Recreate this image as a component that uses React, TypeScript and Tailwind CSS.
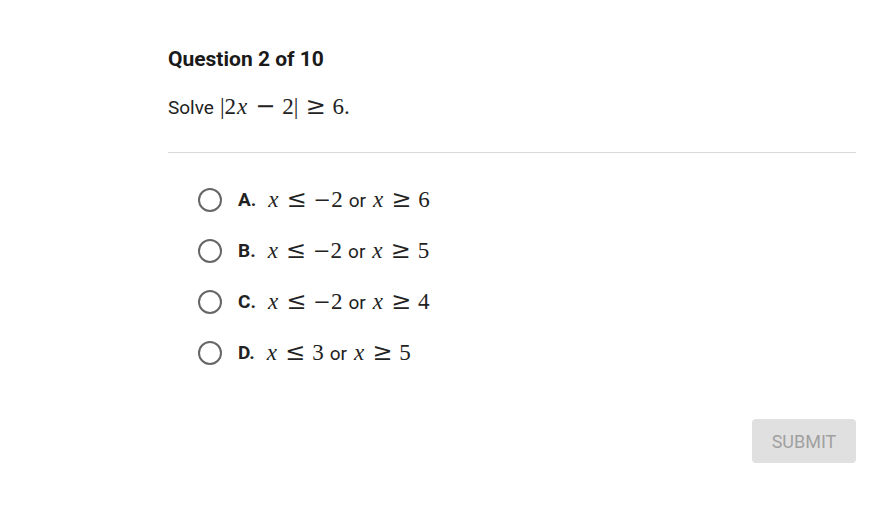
const options = [
  { label: 'A.', a: '−2', b: '6' },
  { label: 'B.', a: '−2', b: '5' },
  { label: 'C.', a: '−2', b: '4' },
  { label: 'D.', a: '3', b: '5' },
];

const serif = "font-['Liberation_Serif',serif]";
const symbol = "font-['DejaVu_Serif',serif]";

const X = () => <span className={`${serif} italic text-[23px] px-[1px]`}>x</span>;

// relation / binary operator with surrounding space
const Op = ({ children }: { children: React.ReactNode }) => (
  <span className={`${symbol} text-[24px] leading-none mx-[7px]`}>{children}</span>
);

const Num = ({ children }: { children: React.ReactNode }) => (
  <span className={`${serif} text-[23px]`}>{children}</span>
);

// number that may start with a unary minus
const Value = ({ v }: { v: string }) =>
  v.startsWith('−') ? (
    <span>
      <span className={`${symbol} text-[21px]`}>−</span>
      <Num>{v.slice(1)}</Num>
    </span>
  ) : (
    <Num>{v}</Num>
  );

export default function App() {
  return (
    <div className="w-[885px] h-[530px] bg-white font-['Roboto',sans-serif] text-[#222]">
      <div className="pl-[168px] pr-[29px] pt-[45px]">
        <h2 className="text-[21px] font-bold leading-[28px] text-[#1a1a1a]">Question 2 of 10</h2>
        <p className="mt-[20px] text-[19px] leading-[28px] flex items-baseline">
          <span className="mr-[6px]">Solve</span>
          <Num>|2</Num>
          <X />
          <Op>−</Op>
          <Num>2|</Num>
          <Op>≥</Op>
          <Num>6.</Num>
        </p>
        <div className="mt-[30px] border-t border-[#d9d9d9]" />
        <ul className="mt-[33px] ml-[30px] flex flex-col gap-[23px]">
          {options.map((o) => (
            <li key={o.label} className="flex items-center h-[28px]">
              <span className="w-[24px] h-[24px] rounded-full border-2 border-[#666] shrink-0" />
              <span className="ml-[16px] text-[19px] font-bold">{o.label}</span>
              <span className="ml-[11px] text-[19px] flex items-baseline">
                <X />
                <Op>≤</Op>
                <Value v={o.a} />
                <span className="mx-[6px]">or</span>
                <X />
                <Op>≥</Op>
                <Value v={o.b} />
              </span>
            </li>
          ))}
        </ul>
        <div className="flex justify-end mt-[52px]">
          <button className="w-[104px] h-[44px] rounded-[4px] bg-[#e0e0e0] text-[#a0a0a0] text-[18px]">
            SUBMIT
          </button>
        </div>
      </div>
    </div>
  );
}
